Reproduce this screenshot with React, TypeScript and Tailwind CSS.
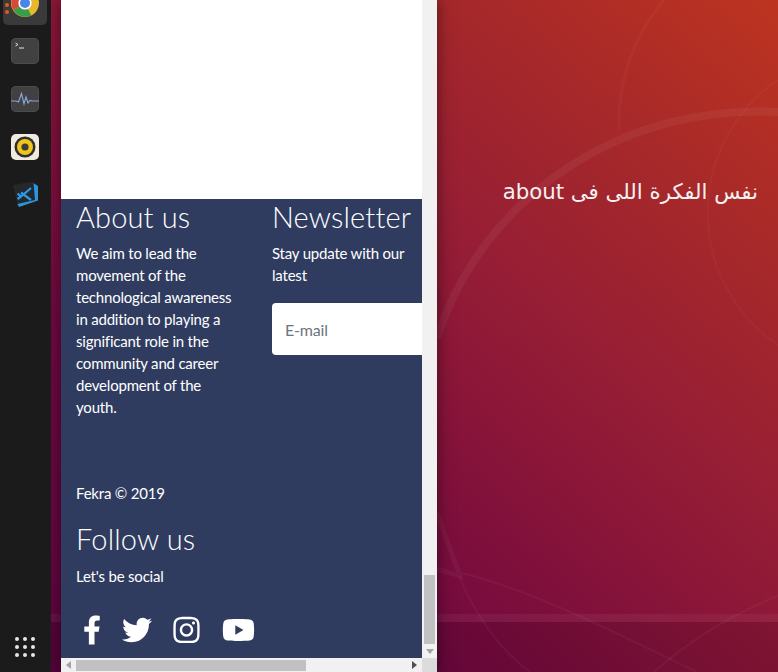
import { FaFacebookF, FaInstagram, FaTwitter, FaYoutube } from "react-icons/fa";

function Dock() {
  return (
    <aside className="relative z-20 flex h-full w-[51px] shrink-0 flex-col items-center bg-[#1b1b1b] pr-[1px]">
      {/* chrome, cut by the top of the screen */}
      <div className="relative mt-[-19px] flex h-[44px] w-[44px] items-center justify-center rounded-[5px] bg-[#3a3a3a]">
        <svg viewBox="0 0 36 36" className="h-[28px] w-[28px]">
          <circle cx="18" cy="18" r="18" fill="#e8b92e" />
          <path d="M18 18 L3 27 A18 18 0 0 0 26 34 Z" fill="#3a9b4b" />
          <path d="M18 18 L3 27 A18 18 0 0 1 18 0 L34 10 Z" fill="#d9483b" />
          <circle cx="18" cy="18" r="8.5" fill="#fff" />
          <circle cx="18" cy="18" r="6.5" fill="#4a86e8" />
        </svg>
        <span className="absolute left-[2px] top-[22px] h-[4px] w-[4px] rounded-full bg-[#e9541f]" />
        <span className="absolute left-[2px] top-[29px] h-[4px] w-[4px] rounded-full bg-[#e9541f]" />
      </div>
      <div className="mt-[13px] flex h-[26px] w-[28px] items-start rounded-[5px] bg-[#414141] pl-[4px] pt-[4px] shadow-[inset_0_0_0_1px_#4c4c4c]">
        <svg viewBox="0 0 12 8" className="h-[8px] w-[12px]">
          <path d="M0.5 1 L3 2.5 L0.5 4" fill="none" stroke="#e8e8e8" strokeWidth="0.9" />
          <path d="M4 6 H9" stroke="#e8e8e8" strokeWidth="1" />
        </svg>
      </div>
      <div className="mt-[22px] h-[26px] w-[28px] rounded-[5px] bg-[#414141] shadow-[inset_0_0_0_1px_#4c4c4c]">
        <svg viewBox="0 0 28 26" className="h-[26px] w-[28px]">
          <path
            d="M0 15 H5 L7.5 16 L10.5 7.5 L13 18 L15 11 L17 17 L19 14.5 L21 15 H28"
            fill="none"
            stroke="#8aa4d6"
            strokeWidth="1.2"
          />
        </svg>
      </div>
      <div className="mt-[22px] flex h-[26px] w-[28px] items-center justify-center rounded-[5px] bg-[#efebe0]">
        <svg viewBox="0 0 24 24" className="h-[24px] w-[24px]">
          <circle cx="12" cy="12" r="10.5" fill="#2f2f2f" />
          <circle cx="12" cy="12" r="8" fill="#f0c419" />
          <circle cx="12" cy="12" r="3.6" fill="#3a3a3a" />
        </svg>
      </div>
      <div className="mt-[21px] h-[26px] w-[26px]">
        <svg viewBox="0 0 26 26" className="h-[26px] w-[26px]">
          <path d="M1 4 L21 0.5 L25 20 L6 25.5 Z" fill="#24272c" />
          <path d="M21.5 2 L26 5 V19.5 L7 26 L5.5 23 L23 19 Z" fill="#2b95dd" />
          <path d="M19 7 L9 15.5 L5.5 12.5 M9 11.5 L19 19 M5.5 18 L9 15.5" fill="none" stroke="#2a9be6" strokeWidth="2.2" />
        </svg>
      </div>
      <div className="mb-[15px] mt-auto grid grid-cols-3 gap-[4px]">
        {Array.from({ length: 9 }).map((_, i) => (
          <span key={i} className="h-[4px] w-[4px] rounded-full bg-[#e6e6e6]" />
        ))}
      </div>
    </aside>
  );
}

// curves of the ubuntu wallpaper, in screen coordinates
function Wallpaper() {
  return (
    <svg viewBox="51 0 727 672" className="absolute inset-0 h-full w-full">
      <rect x="51" y="622" width="727" height="50" fill="#000000" fillOpacity="0.1" />
      <g fill="none" stroke="#ffffff">
        <path d="M437 338 A 335 320 0 0 1 778 112" strokeWidth="8" strokeOpacity="0.05" />
        <path d="M664 0 A 190 190 0 0 0 619 130" strokeWidth="3" strokeOpacity="0.03" />
        <path d="M778 80 A 160 160 0 0 0 778 345" strokeWidth="2" strokeOpacity="0.03" />
        <path d="M51 618 H778" strokeWidth="8" strokeOpacity="0.05" />
        <path d="M437 513 L460 576 L437 569" strokeWidth="5" strokeOpacity="0.04" />
        <path d="M462 573 C530 590 600 625 697 672" strokeWidth="2" strokeOpacity="0.04" />
        <path d="M459 576 C475 615 500 650 530 672" strokeWidth="2" strokeOpacity="0.04" />
        <path d="M654 672 C690 640 730 615 778 596" strokeWidth="2" strokeOpacity="0.04" />
      </g>
    </svg>
  );
}

function BrowserWindow() {
  return (
    <section className="relative z-10 ml-[10px] flex h-full w-[376px] flex-col shadow-[0_0_14px_rgba(0,0,0,0.5)]">
      <div className="flex min-h-0 flex-1">
        <div className="flex w-[361px] flex-col overflow-hidden">
          <div className="h-[199px] shrink-0 bg-white" />
          <footer className="flex-1 bg-[#2f3c5f] pl-[15px] text-[15px] leading-[22px] tracking-[-0.2px] text-white">
            <div className="flex">
              <div className="w-[196px] shrink-0 pr-[30px]">
                <h3 className="text-[29px] font-light leading-[36px] tracking-[0.15px]">About us</h3>
                <p className="mt-[7px]">
                  We aim to lead the movement of the technological awareness in addition to playing a significant role
                  in the community and career development of the youth.
                </p>
              </div>
              <div className="w-[200px] shrink-0">
                <h3 className="text-[29px] font-light leading-[36px] tracking-[0.15px]">Newsletter</h3>
                <p className="mt-[7px] w-[140px]">Stay update with our latest</p>
                <input
                  readOnly
                  placeholder="E-mail"
                  className="mt-[17px] h-[52px] w-full rounded-[4px] bg-white px-[13px] text-[16px] placeholder:text-[#6c757d]"
                />
              </div>
            </div>
            <p className="mt-[64px]">Fekra © 2019</p>
            <h3 className="mt-[17px] text-[29px] font-light leading-[36px] tracking-[0.15px]">Follow us</h3>
            <p className="mt-[8px]">Let's be social</p>
            <div className="mt-[27px] flex items-center pl-[7px]">
              <FaFacebookF className="h-[32px] w-[18px]" />
              <FaTwitter className="ml-[21px] h-[30px] w-[30px]" />
              <FaInstagram className="ml-[21px] h-[30px] w-[27px]" />
              <FaYoutube className="ml-[22px] h-[30px] w-[33px]" />
            </div>
          </footer>
        </div>
        {/* vertical scrollbar */}
        <div className="flex w-[15px] flex-col items-center bg-[#f1f1f1]">
          <div className="mt-auto h-[69px] w-[11px] bg-[#c1c1c1]" />
          <svg viewBox="0 0 8 5" className="mb-[4px] mt-[5px] h-[5px] w-[8px]">
            <path d="M0 0 H8 L4 5 Z" fill="#a3a3a3" />
          </svg>
        </div>
      </div>
      {/* horizontal scrollbar */}
      <div className="flex h-[14px] shrink-0">
        <div className="flex w-[361px] items-center bg-[#f1f1f1]">
          <svg viewBox="0 0 5 8" className="ml-[5px] h-[8px] w-[5px]">
            <path d="M5 0 V8 L0 4 Z" fill="#a3a3a3" />
          </svg>
          <div className="ml-[5px] h-[11px] w-[230px] bg-[#c1c1c1]" />
          <svg viewBox="0 0 5 8" className="ml-auto mr-[5px] h-[8px] w-[5px]">
            <path d="M0 0 V8 L5 4 Z" fill="#505050" />
          </svg>
        </div>
        <div className="w-[15px] bg-[#dcdcdc]" />
      </div>
    </section>
  );
}

export default function App() {
  return (
    <div className="flex h-[672px] w-[778px] overflow-hidden font-['Lato',sans-serif]">
      <Dock />
      <main className="relative flex flex-1 bg-[linear-gradient(222deg,#bd3420_0%,#a2262c_25%,#981f34_37%,#8b1638_50%,#700840_73%,#5e0440_100%)]">
        <Wallpaper />
        <BrowserWindow />
        <p
          dir="rtl"
          className="relative z-10 ml-[66px] mt-[178px] w-[255px] whitespace-nowrap text-[21.3px] leading-[27px] text-[#f6f1f1] font-['DejaVu_Sans',sans-serif]"
        >
          نفس الفكرة اللى فى about
        </p>
      </main>
    </div>
  );
}
